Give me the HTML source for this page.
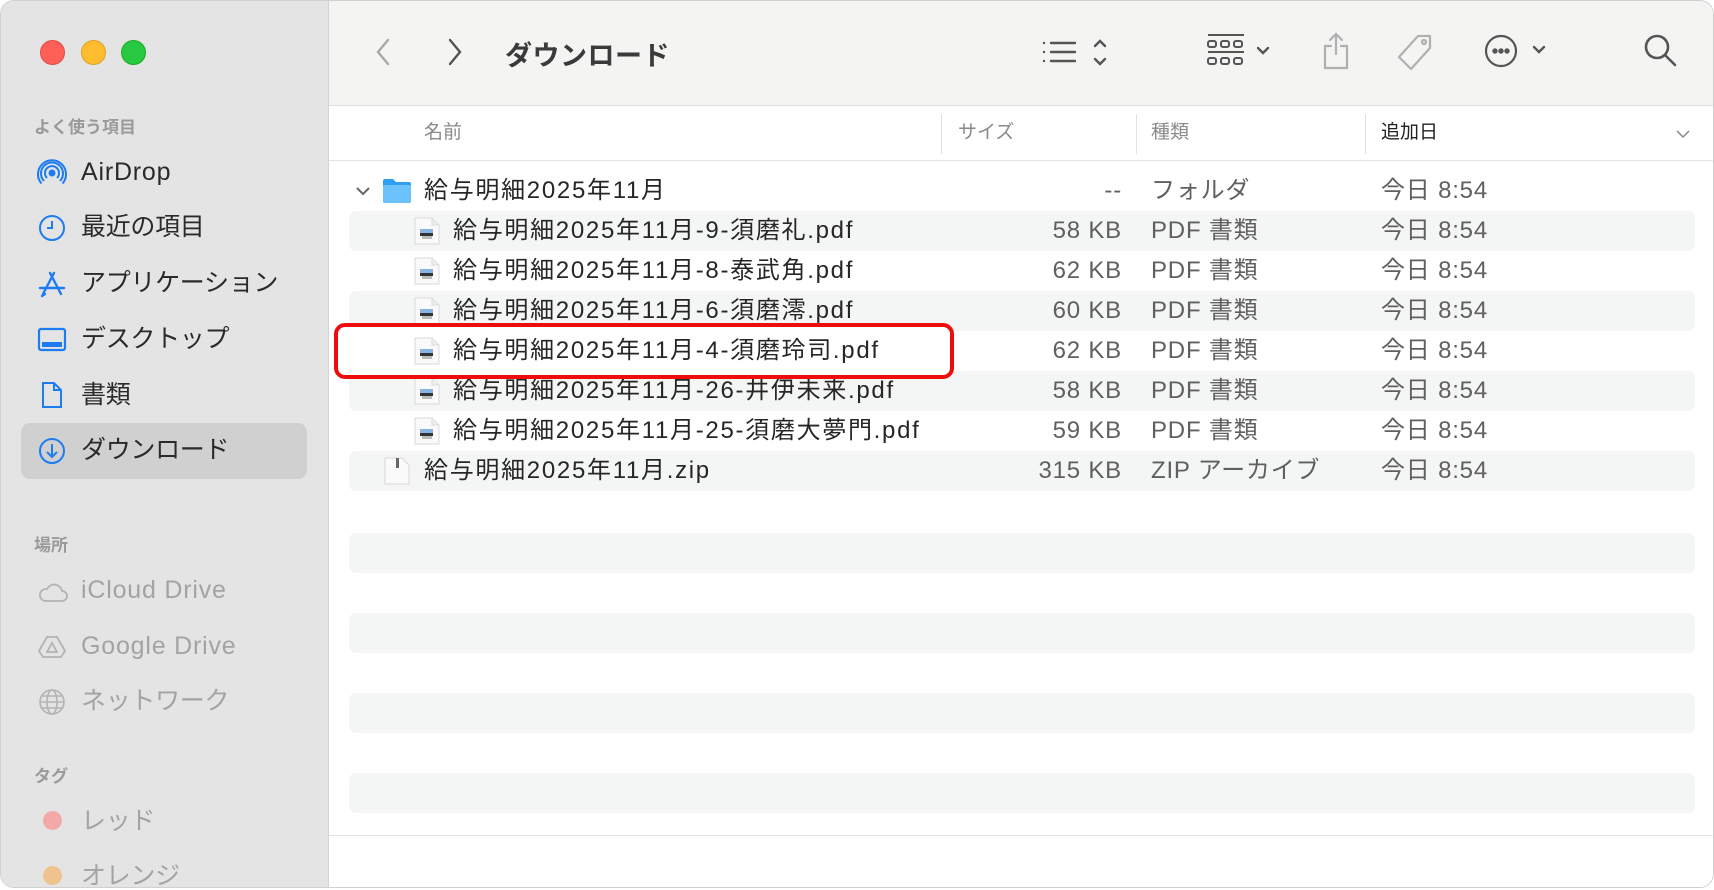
<!DOCTYPE html>
<html><head><meta charset="utf-8"><style>
*{margin:0;padding:0;box-sizing:border-box}
body{width:1714px;height:890px;background:#fff;position:relative;overflow:hidden;font-family:"Liberation Sans","Noto Sans CJK JP",sans-serif;color:#262626}
.win{position:absolute;left:0;top:0;width:1714px;height:888px;border-radius:14px;overflow:hidden;background:#fff;border:1px solid #d0d0d0}
.side{position:absolute;left:0;top:0;width:328px;height:890px;background:#e4e4e4;border-right:1px solid #d4d4d4}
.tl{position:absolute;top:39px;width:25px;height:25px;border-radius:50%}
.sh{position:absolute;left:33px;font-size:17px;color:#9a9a9a;font-weight:bold}
.si{position:absolute;left:80px;font-size:25px;color:#2a2a2a;line-height:30px;letter-spacing:-0.3px}
.si.l{letter-spacing:0.8px}
.si.d{color:#a3a3a3}
.ic{position:absolute;left:36px}
.sel{position:absolute;left:20px;top:422px;width:286px;height:56px;border-radius:9px;background:#d0d0d0}
.tb{position:absolute;left:328px;top:0;right:0;height:105px;background:#f4f4f3;border-bottom:1px solid #dedede}
.hdr{position:absolute;left:328px;top:105px;right:0;height:55px;background:#fff;border-bottom:1px solid #e3e3e3}
.hd{position:absolute;top:11px;font-size:19px;color:#8a8a8a}
.dv{position:absolute;top:8px;width:1px;height:40px;background:#e2e2e2}
.stripe{position:absolute;left:348px;width:1346px;height:40px;background:#f4f5f5;border-radius:7px}
.row{position:absolute;left:0;width:1714px;height:40px;font-size:24px;line-height:40px;letter-spacing:0.8px}
.row span{position:absolute;white-space:nowrap}
.row .n{letter-spacing:1.7px}
.sz{right:593px;color:#606060;text-align:right}
.kd{left:1150px;color:#606060}
.dt{left:1380px;color:#606060}
.pdf{position:absolute;top:6px;width:26px;height:28px}
</style></head><body>
<div class="win">
<div class="side">
<div class="tl" style="left:39px;background:#fe5f57;border:1px solid #e14942"></div>
<div class="tl" style="left:80px;background:#febc2e;border:1px solid #dea123"></div>
<div class="tl" style="left:120px;background:#28c840;border:1px solid #1aab29"></div>
<div class="sh" style="top:112px">よく使う項目</div>
<div class="sel"></div>
<svg class="ic" style="top:157px" width="30" height="30" viewBox="0 0 30 30" fill="none" stroke="#1e7cf2" stroke-width="2"><circle cx="15" cy="15" r="2.5" fill="#1e7cf2"/><path d="M10 20a7 7 0 1 1 10 0M7 23a11 11 0 1 1 16 0M4.5 25.5a14 14 0 1 1 21 0"/></svg>
<div class="si l" style="top:156px">AirDrop</div>
<svg class="ic" style="top:212px" width="30" height="30" viewBox="0 0 30 30" fill="none" stroke="#1e7cf2" stroke-width="2"><circle cx="15" cy="15" r="12"/><path d="M15 8v7h-5"/></svg>
<div class="si" style="top:211px">最近の項目</div>
<svg class="ic" style="top:268px" width="30" height="30" viewBox="0 0 30 30" fill="none" stroke="#1e7cf2" stroke-width="2.4" stroke-linecap="round"><path d="M13 4l11 21M17 4L6 25M3 19h24M8 25l-3 2"/></svg>
<div class="si" style="top:267px">アプリケーション</div>
<svg class="ic" style="top:324px" width="30" height="30" viewBox="0 0 30 30" fill="none" stroke="#1e7cf2" stroke-width="2.2"><rect x="2" y="4" width="26" height="21" rx="2"/><rect x="5" y="17" width="20" height="5" fill="#1e7cf2" stroke="none"/></svg>
<div class="si" style="top:323px">デスクトップ</div>
<svg class="ic" style="top:379px" width="30" height="30" viewBox="0 0 30 30" fill="none" stroke="#1e7cf2" stroke-width="2"><path d="M6 3h11l7 7v17H6zM17 3v7h7"/></svg>
<div class="si" style="top:379px">書類</div>
<svg class="ic" style="top:435px" width="30" height="30" viewBox="0 0 30 30" fill="none" stroke="#1e7cf2" stroke-width="2"><circle cx="15" cy="15" r="12"/><path d="M15 8v13M10 16l5 5 5-5"/></svg>
<div class="si" style="top:434px">ダウンロード</div>
<div class="sh" style="top:530px">場所</div>
<svg class="ic" style="top:576px" width="32" height="30" viewBox="0 0 32 30" fill="none" stroke="#b3b3b3" stroke-width="1.8"><path d="M8 24h17a5 5 0 0 0 0-10a8 8 0 0 0-15-2a6 6 0 0 0-2 12z"/></svg>
<div class="si d l" style="top:574px">iCloud Drive</div>
<svg class="ic" style="top:631px" width="30" height="30" viewBox="0 0 30 30" fill="none" stroke="#b3b3b3" stroke-width="1.8"><path d="M10 5h10l8 14-4 6H6l-4-6zM15 11l-5 9h10z"/></svg>
<div class="si d l" style="top:630px">Google Drive</div>
<svg class="ic" style="top:686px" width="30" height="30" viewBox="0 0 30 30" fill="none" stroke="#b3b3b3" stroke-width="1.6"><circle cx="15" cy="15" r="12"/><ellipse cx="15" cy="15" rx="5" ry="12"/><path d="M3 15h24M5 9h20M5 21h20"/></svg>
<div class="si d" style="top:685px">ネットワーク</div>
<div class="sh" style="top:761px">タグ</div>
<div style="position:absolute;left:42px;top:810px;width:19px;height:19px;border-radius:50%;background:#f4a9a9"></div>
<div class="si d" style="top:805px">レッド</div>
<div style="position:absolute;left:42px;top:865px;width:19px;height:19px;border-radius:50%;background:#f0c38e"></div>
<div class="si d" style="top:860px">オレンジ</div>
</div>

<div class="tb">
<svg style="position:absolute;left:44px;top:36px" width="20" height="30" viewBox="0 0 20 30" fill="none" stroke="#a8a8a8" stroke-width="2.4" stroke-linecap="round"><path d="M15 3L5 15l10 12"/></svg>
<svg style="position:absolute;left:116px;top:36px" width="20" height="30" viewBox="0 0 20 30" fill="none" stroke="#555" stroke-width="2.4" stroke-linecap="round"><path d="M5 3l10 12L5 27"/></svg>
<div style="position:absolute;left:176px;top:33px;font-size:27px;font-weight:bold;color:#3a3a3a;letter-spacing:0.5px">ダウンロード</div>
<svg style="position:absolute;left:712px;top:36px" width="70" height="32" viewBox="0 0 70 32" fill="none" stroke="#555" stroke-width="2.4" stroke-linecap="round"><path d="M3 6h0M3 15h0M3 24h0M10 6h24M10 15h24M10 24h24M54 9l5-5 5 5M54 22l5 5 5-5"/></svg>
<svg style="position:absolute;left:878px;top:32px" width="70" height="38" viewBox="0 0 70 38" fill="none" stroke="#555" stroke-width="2"><path d="M1 2h36M1 19h36"/><rect x="1" y="8" width="8" height="6" rx="2"/><rect x="14" y="8" width="8" height="6" rx="2"/><rect x="27" y="8" width="8" height="6" rx="2"/><rect x="1" y="25" width="8" height="6" rx="2"/><rect x="14" y="25" width="8" height="6" rx="2"/><rect x="27" y="25" width="8" height="6" rx="2"/><path d="M51 15l5 5 5-5" stroke-width="2.4" stroke-linecap="round"/></svg>
<svg style="position:absolute;left:992px;top:30px" width="30" height="40" viewBox="0 0 30 40" fill="none" stroke="#b0b0b0" stroke-width="2.2" stroke-linecap="round"><path d="M15 3v20M9 9l6-6 6 6M10 15H4v22h22V15h-6"/></svg>
<svg style="position:absolute;left:1066px;top:32px" width="40" height="40" viewBox="0 0 40 40" fill="none" stroke="#b0b0b0" stroke-width="2.2" stroke-linejoin="round"><path d="M23 3h12v12L16 36 4 24z"/><circle cx="29" cy="9" r="2"/></svg>
<svg style="position:absolute;left:1152px;top:32px" width="70" height="36" viewBox="0 0 70 36" fill="none" stroke="#555" stroke-width="2.2"><circle cx="20" cy="18" r="15"/><circle cx="14" cy="18" r="1.6" fill="#555"/><circle cx="20" cy="18" r="1.6" fill="#555"/><circle cx="26" cy="18" r="1.6" fill="#555"/><path d="M53 14l5 5 5-5" stroke-width="2.4" stroke-linecap="round"/></svg>
<svg style="position:absolute;left:1314px;top:32px" width="36" height="36" viewBox="0 0 36 36" fill="none" stroke="#555" stroke-width="2.6" stroke-linecap="round"><circle cx="14" cy="14" r="11"/><path d="M22 22l10 10"/></svg>
</div>

<div class="hdr">
<div class="hd" style="left:95px">名前</div>
<div class="dv" style="left:612px"></div>
<div class="hd" style="left:629px">サイズ</div>
<div class="dv" style="left:807px"></div>
<div class="hd" style="left:822px">種類</div>
<div class="dv" style="left:1036px"></div>
<div class="hd" style="left:1052px;color:#222">追加日</div>
<svg style="position:absolute;right:22px;top:22px" width="16" height="12" viewBox="0 0 16 12" fill="none" stroke="#888" stroke-width="1.5"><path d="M2 3l6 6 6-6"/></svg>
</div>

<div class="stripe" style="top:210px"></div>
<div class="stripe" style="top:290px"></div>
<div class="stripe" style="top:370px"></div>
<div class="stripe" style="top:450px"></div>
<div class="stripe" style="top:532px"></div>
<div class="stripe" style="top:612px"></div>
<div class="stripe" style="top:692px"></div>
<div class="stripe" style="top:772px"></div>
<div style="position:absolute;left:328px;top:834px;right:0;height:1px;background:#e3e3e3"></div>

<svg width="0" height="0" style="position:absolute"><defs><g id="pdf"><path d="M1 1h17l7 7v19H1z" fill="#fafafa" stroke="#d8d8d8"/><path d="M18 1v7h7" fill="#eee" stroke="#d8d8d8"/><rect x="6" y="12" width="13" height="4" fill="#8cb3e8"/><rect x="6" y="16" width="13" height="3" fill="#333"/><rect x="8" y="19" width="10" height="3" fill="#bbb"/></g></defs></svg>

<div class="row" style="top:170px">
<svg style="position:absolute;left:354px;top:14px" width="16" height="12" viewBox="0 0 16 12" fill="none" stroke="#666" stroke-width="2"><path d="M2 3l6 6 6-6"/></svg>
<svg style="position:absolute;left:381px;top:7px" width="30" height="26" viewBox="0 0 30 26"><path d="M1 3a2 2 0 0 1 2-2h8l3 3h13a2 2 0 0 1 2 2v17a2 2 0 0 1-2 2H3a2 2 0 0 1-2-2z" fill="#2f9ff2"/><rect x="1" y="7" width="28" height="18" rx="2" fill="#6cc2fb"/></svg>
<span class="n" style="left:423px">給与明細2025年11月</span><span class="sz">--</span><span class="kd">フォルダ</span><span class="dt">今日 8:54</span></div>
<div class="row" style="top:210px"><svg class="pdf" style="left:413px" viewBox="0 0 26 28"><use href="#pdf"/></svg><span class="n" style="left:452px">給与明細2025年11月-9-須磨礼.pdf</span><span class="sz">58 KB</span><span class="kd">PDF 書類</span><span class="dt">今日 8:54</span></div>
<div class="row" style="top:250px"><svg class="pdf" style="left:413px" viewBox="0 0 26 28"><use href="#pdf"/></svg><span class="n" style="left:452px">給与明細2025年11月-8-泰武角.pdf</span><span class="sz">62 KB</span><span class="kd">PDF 書類</span><span class="dt">今日 8:54</span></div>
<div class="row" style="top:290px"><svg class="pdf" style="left:413px" viewBox="0 0 26 28"><use href="#pdf"/></svg><span class="n" style="left:452px">給与明細2025年11月-6-須磨澪.pdf</span><span class="sz">60 KB</span><span class="kd">PDF 書類</span><span class="dt">今日 8:54</span></div>
<div class="row" style="top:370px"><svg class="pdf" style="left:413px" viewBox="0 0 26 28"><use href="#pdf"/></svg><span class="n" style="left:452px">給与明細2025年11月-26-井伊未来.pdf</span><span class="sz">58 KB</span><span class="kd">PDF 書類</span><span class="dt">今日 8:54</span></div>
<div class="row" style="top:410px"><svg class="pdf" style="left:413px" viewBox="0 0 26 28"><use href="#pdf"/></svg><span class="n" style="left:452px">給与明細2025年11月-25-須磨大夢門.pdf</span><span class="sz">59 KB</span><span class="kd">PDF 書類</span><span class="dt">今日 8:54</span></div>
<div class="row" style="top:450px"><svg style="position:absolute;left:383px;top:6px" width="26" height="28" viewBox="0 0 26 28"><path d="M1 1h17l7 7v19H1z" fill="#fafafa" stroke="#d8d8d8"/><rect x="12" y="1" width="3" height="10" fill="#666"/></svg><span class="n" style="left:423px">給与明細2025年11月.zip</span><span class="sz">315 KB</span><span class="kd">ZIP アーカイブ</span><span class="dt">今日 8:54</span></div>

<div style="position:absolute;left:333px;top:322px;width:620px;height:56px;border:4px solid #ee0d0d;border-radius:11px;background:#fff"></div>
<div class="row" style="top:330px"><svg class="pdf" style="left:413px" viewBox="0 0 26 28"><use href="#pdf"/></svg><span class="n" style="left:452px">給与明細2025年11月-4-須磨玲司.pdf</span><span class="sz">62 KB</span><span class="kd">PDF 書類</span><span class="dt">今日 8:54</span></div>
</div>
</body></html>
